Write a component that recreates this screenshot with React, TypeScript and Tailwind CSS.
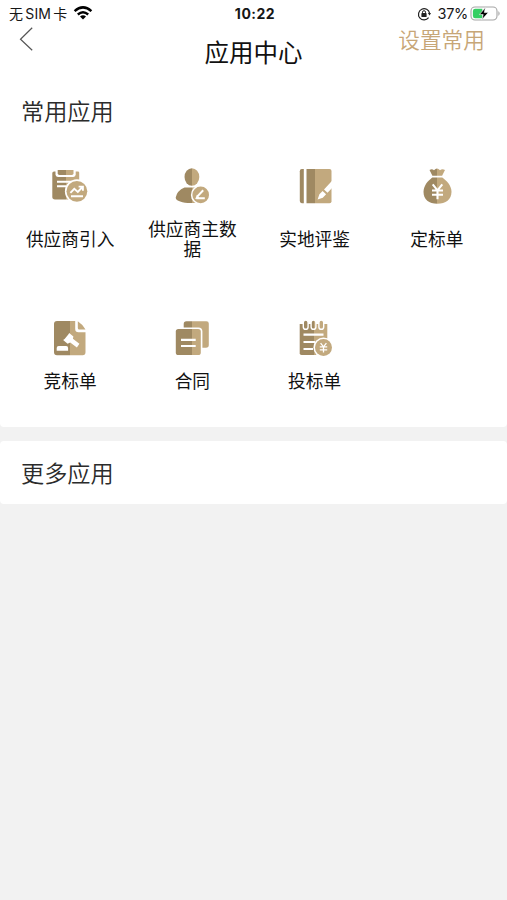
import React, { ReactNode } from 'react';

const DARK = '#9f8962';
const LIGHT = '#c2a97e';

interface AppItem {
  label: string;
  icon: ReactNode;
}

// Two-tone fill: dark left half, light right half
function TwoTone({ id, split }: { id: string; split: number }) {
  return (
    <defs>
      <linearGradient id={id} gradientUnits="userSpaceOnUse" x1="0" y1="0" x2="60" y2="0">
        <stop offset={split / 60} stopColor={DARK} />
        <stop offset={split / 60} stopColor={LIGHT} />
      </linearGradient>
    </defs>
  );
}

function IconFrame({ children }: { children: ReactNode }) {
  return (
    <svg viewBox="0 0 60 50" className="w-[60px] h-[50px]" fill="none">
      {children}
    </svg>
  );
}

const items: AppItem[] = [
  {
    label: '供应商引入',
    icon: (
      <IconFrame>
        <TwoTone id="intro" split={26} />
        <path d="M14 11.5h24q1.2 0 1.2 1.2V39.5H15q-2.7 0-2.7-2.7V13q0-1.5 1.7-1.5Z" fill="url(#intro)" />
        <path d="M15.5 9v5.5q0 2.4 2.4 2.4h15.4q2.4 0 2.4-2.4V9Z" fill="#fff" />
        <path d="M17.7 10h15.8v3.2q0 1.7-1.7 1.7H19.4q-1.7 0-1.7-1.7Z" fill="url(#intro)" />
        <path d="M17 21.7h15M17 26.2h9.5" stroke="#fff" strokeWidth="1.9" />
        <circle cx="36.9" cy="31.3" r="12" fill="#fff" />
        <circle cx="36.9" cy="31.3" r="10.4" fill={LIGHT} />
        <path d="m30.4 32.9 3.9-4 3.5 3 4.6-4.9M38.6 26.6h4.3v4.2M31 36.3h12" stroke="#fff" strokeWidth="1.9" />
      </IconFrame>
    ),
  },
  {
    label: '供应商主数据',
    icon: (
      <IconFrame>
        <TwoTone id="person" split={30} />
        <ellipse cx="29.9" cy="17" rx="7.4" ry="8.8" fill="url(#person)" />
        <path d="M22.5 27.6h14q8 3.8 9 8.5c.4 9.2-32.2 9-31.8 1.5q1.2-6.7 8.8-10Z" fill="url(#person)" />
        <circle cx="38.7" cy="34.9" r="9.8" fill="#fff" />
        <circle cx="38.7" cy="34.9" r="8.3" fill={LIGHT} />
        <path d="m41.2 30.2-6 6.4M34.2 38.2h8.6" stroke="#fff" strokeWidth="2" />
        <path d="m35 34.8-1.8 4.3 4.4-.8Z" fill="#fff" />
      </IconFrame>
    ),
  },
  {
    label: '实地评鉴',
    icon: (
      <IconFrame>
        <TwoTone id="book" split={30.5} />
        <path d="M16.8 9h2v34.2h-2q-2-.1-2-2.2V11.2q0-2.1 2-2.2Z" fill={DARK} />
        <path d="M21.5 9h23q2 0 2 2v30.2q0 2-2 2h-23Z" fill="url(#book)" />
        <path d="m48 19.8-9 9.8 3.5 3.2 6-6.2ZM37.6 31l3.5 3.3-3.3 3.4-5.2 1.7 1.8-5.2Z" fill="#fff" />
      </IconFrame>
    ),
  },
  {
    label: '定标单',
    icon: (
      <IconFrame>
        <TwoTone id="bag" split={30} />
        <path d="M22.5 10q2.5-1.8 4.5.3 3-3.6 6 0 2.2-2 5-.3l-2.9 5.7h-9.7Z" fill="url(#bag)" />
        <path d="M25.3 17.4h10c5 3.5 9.2 8.5 9.2 14.4 0 7.9-5.8 11.9-14.2 11.9S16.5 39.7 16.5 31.8c0-5.9 4-10.9 8.8-14.4Z" fill="url(#bag)" />
        <path d="m25.7 24.3 4.8 6 4.8-6M25 30.5h11M25 34.8h11M30.5 29.5v9.7" stroke="#fff" strokeWidth="2.1" />
      </IconFrame>
    ),
  },
  {
    label: '竞标单',
    icon: (
      <IconFrame>
        <TwoTone id="bid" split={30} />
        <path d="M17 9h18.2v8q0 3.3 3.3 3.3h7v20q0 2.9-2.9 2.9H17q-3 0-3-2.9V12q0-3 3-3Z" fill="url(#bid)" />
        <path d="M37.8 9.2q4.8 3 7.7 8.4h-6.2q-1.5 0-1.5-1.5Z" fill={LIGHT} />
        <path d="M18.7 34h7.4q2 0 2 2v2.8H16.7V36q0-2 2-2Z" fill="#fff" />
        <path d="m29.2 21 4.2 3.4-.5 2.4 6.5 5-2.5 3.8-6.7-5.2-2.6 1.3-4.5-3.7 1.5-1 3.7-4.6Z" fill="#fff" />
      </IconFrame>
    ),
  },
  {
    label: '合同',
    icon: (
      <IconFrame>
        <TwoTone id="contract" split={30} />
        <path d="M24.4 9.2h20q2.4 0 2.4 2.4V33q0 2.8-2.8 2.8h-3.6V19.4q0-4-4-4H21.7v-3.5q0-2.7 2.7-2.7Z" fill="url(#contract)" />
        <rect x="13.8" y="17" width="25" height="26" rx="2.6" fill="url(#contract)" />
        <path d="M19 27.9h14.7M19 34h14.7" stroke="#fff" strokeWidth="2.2" />
      </IconFrame>
    ),
  },
  {
    label: '投标单',
    icon: (
      <IconFrame>
        <TwoTone id="tender" split={29} />
        <path d="M14.7 12h27.6v31H16.5q-1.8 0-1.8-1.8Z" fill="url(#tender)" />
        <g fill="url(#tender)" stroke="#fff" strokeWidth="1.4">
          <rect x="18.3" y="8.1" width="4.8" height="9.2" rx="2.4" />
          <rect x="26.1" y="8.1" width="4.8" height="9.2" rx="2.4" />
          <rect x="33.9" y="8.1" width="4.8" height="9.2" rx="2.4" />
        </g>
        <path d="M18.5 22.7h20M18.5 30h11.8M18.5 37h9.5" stroke="#fff" strokeWidth="2.2" />
        <circle cx="38.5" cy="35.6" r="10.1" fill="#fff" />
        <circle cx="38.5" cy="35.6" r="8.5" fill={LIGHT} />
        <path d="m35.6 31.1 2.9 3.7 2.9-3.7M34.8 34.9h7.4M34.8 37.8h7.4M38.5 34.3v6.2" stroke="#fff" strokeWidth="1.3" />
      </IconFrame>
    ),
  },
];

function StatusBar() {
  return (
    <div className="grid grid-cols-[1fr_auto_1fr] items-center h-[27px] pl-[9px] pr-[6px] text-[#161616]">
      <div className="flex items-center">
        <span className="text-[14px] leading-5 tracking-[0.2px] whitespace-nowrap">
          无<span className="mx-[2px]">SIM</span>卡
        </span>
        <svg viewBox="0 0 20 14" className="w-[20px] h-[14px] ml-[6px] -mt-px" fill="none" stroke="#000">
          <path d="M1.6 5.1Q10-2.3 18.4 5.1" strokeWidth="2.5" />
          <path d="M4.8 8.5q5.2-4.5 10.4 0" strokeWidth="2.4" />
          <path d="m10 13.6-3-3q3-2.5 6 0Z" fill="#000" stroke="none" />
        </svg>
      </div>
      <span className="text-[14px] leading-5 font-bold tracking-[0.5px]">10:22</span>
      <div className="flex items-center justify-end">
        <svg viewBox="0 0 14 14" className="w-[14px] h-[14px]" fill="none" stroke="#222">
          <path d="M11.6 10.6A5.6 5.6 0 1 1 12.6 6.3" strokeWidth="1.2" />
          <path d="m10.9 6.1 3.1-.2-1.4 2.5Z" fill="#222" stroke="none" />
          <rect x="4.4" y="6.1" width="5.2" height="4" rx=".7" fill="#222" stroke="none" />
          <path d="M5.5 6.5V5.2a1.5 1.5 0 0 1 3 0v1.3" strokeWidth="1" />
        </svg>
        <span className="text-[14.5px] leading-5 ml-[6px] tracking-[-0.3px]">37%</span>
        <svg viewBox="0 0 31 15" className="w-[31px] h-[15px] ml-[2px]" fill="none">
          <rect x="1" y="1" width="26" height="13" rx="4" stroke="#a5a5a5" strokeWidth="1.1" />
          <path d="M5.2 2.8h7.1v9.4H5.2Q2.9 12.2 2.9 10V5Q2.9 2.8 5.2 2.8Z" fill="#35cf63" />
          <path d="M28.4 5q2.4 2.5 0 5Z" fill="#a5a5a5" />
          <path d="m15.4 1.6-6 7h3.8l-1.2 5 6.3-7h-4Z" fill="#000" stroke="#fff" strokeWidth=".6" />
        </svg>
      </div>
    </div>
  );
}

function Header() {
  return (
    <header className="grid grid-cols-[1fr_auto_1fr] h-[51px] pl-[19px] pr-[22px]">
      <svg viewBox="0 0 14 24" className="w-[14px] h-[24px]" fill="none" stroke="#555" strokeWidth="1.2">
        <path d="M13.2.7 1.5 12.2l11.7 11" />
      </svg>
      <h1 className="text-[24.5px] leading-[52px] pl-[3px] text-[#111]">应用中心</h1>
      <button className="justify-self-end self-start text-[21.7px] leading-[27px] font-[350] text-[#c7a677]">设置常用</button>
    </header>
  );
}

export default function App() {
  return (
    <div className="min-h-screen bg-[#f2f2f2] font-['Inter','Noto_Sans_CJK_SC',sans-serif]">
      <div className="bg-white">
        <StatusBar />
        <Header />
      </div>

      {/* Favourite apps */}
      <section className="bg-white rounded-b-[4px] h-[349px]">
        <h2 className="pl-[21px] pt-[17px] text-[23.2px] leading-[34px] font-[350] text-[#2b2b2b]">常用应用</h2>
        <div className="grid grid-cols-4 gap-y-[53px] px-[9px] pt-[31px]">
          {items.map((item) => (
            <button key={item.label} className="grid grid-rows-[50px_1fr] gap-[10px] justify-items-center">
              {item.icon}
              <span className="w-[92px] flex items-center justify-center text-center text-[17.7px] leading-[19.5px] text-[#111]">
                {item.label}
              </span>
            </button>
          ))}
        </div>
      </section>

      {/* More apps */}
      <section className="mt-[14px] bg-white rounded-[4px] h-[63px]">
        <h2 className="pl-[21px] text-[23.2px] leading-[67px] font-[350] text-[#2b2b2b]">更多应用</h2>
      </section>
    </div>
  );
}
